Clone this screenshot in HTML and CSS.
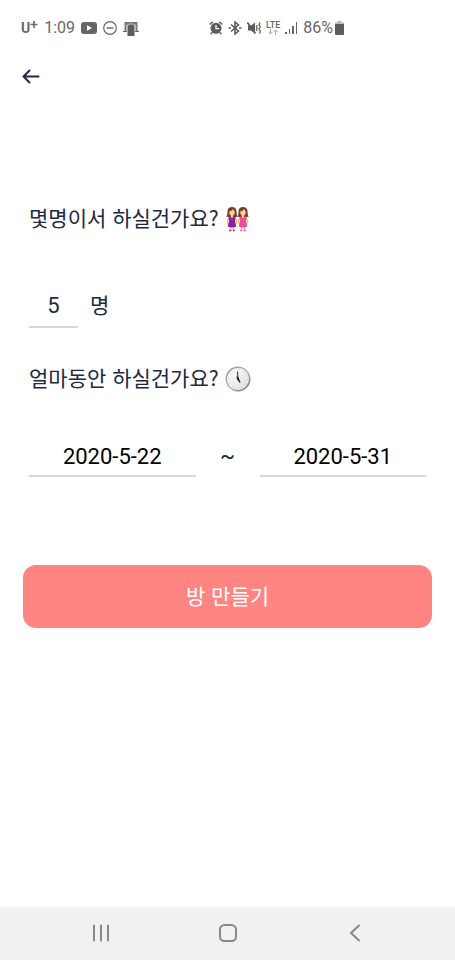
FILE: index.html
```html
<!DOCTYPE html>
<html lang="ko">
<head>
<meta charset="utf-8">
<meta name="viewport" content="width=device-width, initial-scale=1">
<title>방 만들기</title>
<link rel="stylesheet" href="styles.css">
</head>
<body>
<div class="status">
  <div class="status-group status-left">
    <span class="carrier">U<svg width="8" height="16" viewBox="0 0 8 16"><path d="M4 1v7M.5 4.500h7" stroke="#666" stroke-width="1.600"/></svg></span>
    <span class="clock">1:09</span>
    <svg width="16" height="12" viewBox="0 0 16 12"><rect width="16" height="12" rx="3" fill="#666"/><path d="M6 3.200v5.600L11 6z" fill="#fff"/></svg>
    <svg width="14" height="14" viewBox="0 0 14 14" fill="none" stroke="#666"><circle cx="7" cy="7" r="6.300" stroke-width="1.200"/><path d="M3.500 7h7" stroke-width="1.400"/></svg>
    <svg width="16" height="15" viewBox="0 0 16 15"><path d="M1.500 1h13v9h-2V3.500h-9V10h-2z" fill="#777"/><path d="M0 10.500h4M12 10.500h4" stroke="#666" stroke-width="1.200"/><rect x="4.500" y="3" width="7" height="12" fill="#5c5c5c"/><path d="M5 4.500l1-1.500h4l1 1.500" fill="none" stroke="#ddd" stroke-width=".8"/></svg>
  </div>
  <div class="status-group status-right">
    <svg width="14" height="14" viewBox="0 0 14 14"><circle cx="7" cy="7.300" r="5.500" fill="#5c5c5c"/><path d="M.7 3.500L3.800.9M13.300 3.500L10.200.9M3 11.500l-1.300 1.800M11 11.500l1.300 1.800" stroke="#5c5c5c" stroke-width="1.500"/><path d="M7 4v3.700h3" fill="none" stroke="#fff" stroke-width="1.300"/></svg>
    <svg width="14" height="14" viewBox="0 0 14 14" fill="none" stroke="#5c5c5c" stroke-width="1.600"><path d="M3 3.500l7.500 6.500L7 13V1l3.500 3L3 10.500"/><path d="M.5 7h2.500M11 7h2.500"/></svg>
    <svg width="14" height="14" viewBox="0 0 14 14"><path d="M1 4.500h3L8 1.500v11L4 9.500H1z" fill="#5c5c5c"/><path d="M.5 1.500l8 11" stroke="#5c5c5c" stroke-width="1.600"/><path d="M10.300 4l-1 1.500 1 1.500-1 1.500 1 1.500M13 1.500L12 4l1.300 2L12 8l1.300 2-.8 2.500" fill="none" stroke="#5c5c5c" stroke-width="1.200"/></svg>
    <span class="lte"><span>LTE</span><svg width="10" height="6" viewBox="0 0 10 6" fill="none" stroke="#aaa"><path d="M2.500 0v5M.5 3l2 2 2-2M7.500 6V1M5.500 3l2-2 2 2"/></svg></span>
    <svg width="13" height="13" viewBox="0 0 13 13" fill="#666"><path d="M0 10h2v2H0zM4 7h1v5H4zM7 4h2v8H7zM11 0h1v12h-1z"/></svg>
    <span class="battery">86%<svg width="9" height="14" viewBox="0 0 9 14"><path d="M2.500 0h4v1.500H9V4H0V1.500h2.500z" fill="#bbb"/><path d="M0 3h9v10q0 1-1 1H1q-1 0-1-1z" fill="#5c5c5c"/></svg></span>
  </div>
</div>
<header class="header">
  <button class="back" type="button" aria-label="뒤로"><svg width="18" height="16" viewBox="0 0 18 16" fill="none" stroke="#202842" stroke-width="2" stroke-linecap="round" stroke-linejoin="round"><path d="M16.500 8.500H1.500M7.500 2.500l-6 6 6 6"/></svg></button>
</header>
<main>
  <form class="form">
    <label class="question" for="people"><span class="korean">몇명이서 하실건가요?</span>
      <svg width="26" height="26" viewBox="0 0 26 26">
        <defs><g id="woman">
          <path d="M4.600 20v4M7.400 20v4" stroke="#f3b36b" stroke-width="1.500"/>
          <path d="M3.300 24.500h2M6.800 24.500h2" stroke="currentColor" stroke-width="1.500"/>
          <path d="M1.500 5.500Q1.500 1 6 1t4.500 4.500q0 4 1.200 5Q8.500 12 6 10.500 3.500 12 .3 10.500q1.200-1 1.200-5z" fill="#71402c"/>
          <ellipse cx="6" cy="6.300" rx="2.700" ry="3.400" fill="#ffd18b"/>
          <path d="M3.200 5.500Q6 5 7 3l1.800 2.800Q9 2.200 6 2T3.200 5.500z" fill="#71402c"/>
          <path d="M3 11.500L1.300 15l1 3.500M9 11.500l1.700 3.500-1 3.500" fill="none" stroke="#f9be77" stroke-width="1.500"/>
          <path d="M2.500 10.500h2L6 12l1.500-1.500h2L9 15.500l1.300 5q-4.300 2-8.600 0l1.300-5z" fill="currentColor"/>
          <path d="M5 9h2v1.500l-1 1-1-1z" fill="#ffd18b"/>
        </g></defs>
        <use href="#woman" x="1" class="woman-purple"/><use href="#woman" x="12" class="woman-pink"/>
      </svg>
    </label>
    <div class="people-row">
      <input class="field field-people" id="people" type="text" inputmode="numeric" value="5">
      <span class="korean">명</span>
    </div>
    <label class="question" for="start"><span class="korean">얼마동안 하실건가요?</span>
      <svg width="26" height="26" viewBox="0 0 26 26">
        <defs><linearGradient id="rim" x1="0" y1="0" x2="1" y2="1"><stop stop-color="#888"/><stop offset=".5" stop-color="#bbb"/><stop offset="1" stop-color="#666"/></linearGradient><linearGradient id="face" x1="0" y1="0" x2="1" y2="1"><stop stop-color="#fff"/><stop offset="1" stop-color="#ddd"/></linearGradient></defs>
        <circle cx="13" cy="13" r="11.700" fill="url(#face)" stroke="url(#rim)" stroke-width="1.500"/>
        <circle cx="13" cy="13" r="9.500" fill="none" stroke="#bbb" stroke-dasharray="1 3.974"/>
        <path d="M12.500 5.500L13 13" stroke="#333"/><path d="M12 10.500l3 6" stroke="#222" stroke-width="1.500"/><circle cx="13" cy="13" r="1.200" fill="#222"/>
      </svg>
    </label>
    <div class="date-row">
      <input class="field" id="start" type="text" value="2020-5-22">
      <span class="tilde">~</span>
      <input class="field" type="text" aria-label="종료일" value="2020-5-31">
    </div>
    <button class="submit" type="button"><span class="korean">방 만들기</span></button>
  </form>
</main>
<nav class="nav">
  <button type="button" aria-label="최근 앱"><svg width="18" height="18" viewBox="0 0 18 18" stroke="#888" stroke-width="2" stroke-linecap="round"><path d="M2 1.500v15M9 1.500v15M16 1.500v15"/></svg></button>
  <button type="button" aria-label="홈"><svg width="18" height="18" viewBox="0 0 18 18" fill="none" stroke="#888" stroke-width="2"><rect x="1" y="1" width="16" height="16" rx="4.500"/></svg></button>
  <button type="button" aria-label="뒤로 가기"><svg width="18" height="18" viewBox="0 0 18 18" fill="none" stroke="#888" stroke-width="2" stroke-linecap="round"><path d="M14 1.500L6 9l8 7.500"/></svg></button>
</nav>
</body>
</html>
```
FILE: styles.css
```css
* {
  box-sizing: border-box;
}

body {
  margin: 0;
  min-height: 100vh;
  display: flex;
  flex-direction: column;
  background: #fff;
  color: #202842;
  font-family: Roboto, "Noto Sans CJK KR", sans-serif;
}

button {
  border: 0;
  padding: 0;
  background: none;
  font: inherit;
  color: inherit;
}

svg {
  display: block;
  flex: none;
}

.status {
  display: grid;
  grid-template-columns: 188px 1fr;
  height: 56px;
  padding-left: 21px;
  color: #666;
  font-size: 16px;
  line-height: 20px;
}

.status-group {
  display: flex;
  align-items: center;
}

.status-left {
  gap: 6px;
}

.status-right {
  gap: 5px;
}

.carrier {
  display: flex;
  align-items: center;
  font-size: 14px;
  font-weight: 700;
}

.battery {
  display: flex;
  align-items: center;
  gap: 2px;
}

.lte {
  display: flex;
  flex-direction: column;
  align-items: center;
  font-size: 9px;
  font-weight: 500;
  line-height: 8px;
}

.header {
  height: 40px;
  padding-left: 22px;
  display: flex;
  align-items: center;
}

main {
  flex: 1;
  padding: 108px 23px 0;
}

.form {
  display: flex;
  flex-direction: column;
}

.korean {
  padding-bottom: 4px;
  font-family: "Noto Sans CJK KR", sans-serif;
  font-size: 21px;
  line-height: 30px;
}

.question {
  display: flex;
  align-items: center;
  gap: 6px;
  height: 30px;
  padding-left: 6px;
}

.woman-purple {
  color: #8b229c;
}

.woman-pink {
  color: #ed4b9b;
}

.people-row {
  display: flex;
  align-items: center;
  gap: 12px;
  margin: 50px 6px 36px;
}

.field {
  min-width: 0;
  height: 44px;
  padding: 0;
  border: 0;
  border-bottom: 2px solid #d8d8d8;
  border-radius: 0;
  background: none;
  color: #000;
  font-family: Roboto, sans-serif;
  font-size: 22px;
  text-align: center;
}

.field-people {
  width: 49px;
  color: #202842;
}

.date-row {
  display: grid;
  grid-template-columns: 1fr 64px 1fr;
  align-items: center;
  margin: 40px 6px 88px;
}

.date-row .field {
  height: 43px;
  padding-top: 3px;
}

.tilde {
  font-size: 22px;
  text-align: center;
}

.submit {
  display: flex;
  align-items: center;
  justify-content: center;
  height: 63px;
  border-radius: 13px;
  background: #ff8583;
  color: #fff;
}

.nav {
  display: flex;
  justify-content: space-between;
  height: 53px;
  padding: 0 76px 2px;
  background: #f1f1f1;
}

.nav button {
  width: 50px;
  display: flex;
  align-items: center;
  justify-content: center;
}
```
